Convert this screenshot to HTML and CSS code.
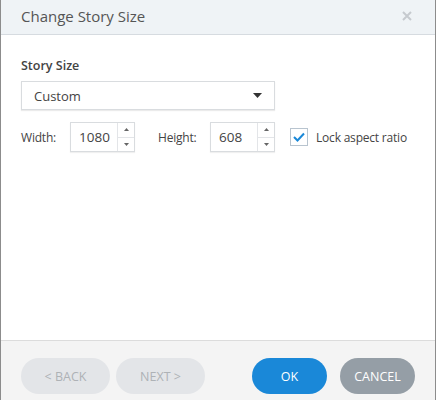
FILE: index.html
```html
<!DOCTYPE html>
<html>
<head>
<meta charset="utf-8">
<link rel="stylesheet" href="styles.css">
</head>
<body>
<div class="dialog">
  <div class="header">
    <div class="title">Change Story Size</div>
    <svg class="close" width="10" height="10" viewBox="0 0 10 10"><path d="M1 1L9 9M9 1L1 9" stroke="#c6cacf" stroke-width="2"/></svg>
  </div>
  <div class="body">
    <div class="label">Story Size</div>
    <div class="select">
      <span>Custom</span>
      <svg width="9" height="5" viewBox="0 0 9 5"><path d="M0 0H9L4.5 5Z" fill="#333"/></svg>
    </div>
    <div class="row">
      <span class="fl">Width:</span>
      <div class="spin">
        <span class="val">1080</span>
        <div class="arrows">
          <div class="arr"><svg width="5" height="3" viewBox="0 0 5 3"><path d="M0 3H5L2.5 0Z" fill="#666"/></svg></div>
          <div class="arr"><svg width="5" height="3" viewBox="0 0 5 3"><path d="M0 0H5L2.5 3Z" fill="#666"/></svg></div>
        </div>
      </div>
      <span class="fl hl">Height:</span>
      <div class="spin">
        <span class="val">608</span>
        <div class="arrows">
          <div class="arr"><svg width="5" height="3" viewBox="0 0 5 3"><path d="M0 3H5L2.5 0Z" fill="#666"/></svg></div>
          <div class="arr"><svg width="5" height="3" viewBox="0 0 5 3"><path d="M0 0H5L2.5 3Z" fill="#666"/></svg></div>
        </div>
      </div>
      <div class="check">
        <svg width="12" height="10" viewBox="0 0 12 10"><path d="M1 5L4.5 8.5L11 1.5" stroke="#1a88d8" stroke-width="2" fill="none"/></svg>
      </div>
      <span class="cl">Lock aspect ratio</span>
    </div>
  </div>
  <div class="footer">
    <div class="btn dis">&lt; BACK</div>
    <div class="btn dis">NEXT &gt;</div>
    <div class="spacer"></div>
    <div class="btn ok">OK</div>
    <div class="btn cancel">CANCEL</div>
  </div>
</div>
</body>
</html>
```
FILE: styles.css
```css
html, body { margin: 0; padding: 0; }
body { width: 436px; height: 400px; overflow: hidden; background: #fff; font-family: "Open Sans", "Noto Sans", sans-serif; color: #444; }
.dialog { width: 436px; height: 420px; box-sizing: border-box; border-left: 1px solid #8c8c8c; border-right: 1px solid #8c8c8c; display: flex; flex-direction: column; }
.header { height: 34px; background: #eff3f6; border-bottom: 1px solid #d6dbe0; display: flex; align-items: center; padding: 0 23px 0 20px; justify-content: space-between; }
.title { font-size: 15px; color: #555; margin-top: -3px; }
.close { margin-top: -3px; }
.body { flex: 1; padding: 22px 20px 0 20px; }
.label { font-size: 12.5px; font-weight: 600; color: #444; height: 18px; }
.select { margin-top: 6px; width: 254px; height: 29px; box-sizing: border-box; border: 1px solid #d9dcdf; box-shadow: 0 1px 1px rgba(0,0,0,0.08); display: flex; align-items: center; justify-content: space-between; padding: 0 12px 0 12px; font-size: 13px; color: #444; }
.row { display: flex; align-items: center; margin-top: 12px; height: 30px; }
.fl { font-size: 12px; letter-spacing: -0.2px; color: #444; width: 49px; }
.hl { margin-left: 23px; width: 52px; }
.spin { width: 65px; height: 30px; box-sizing: border-box; border: 1px solid #d9dcdf; display: flex; box-shadow: 0 1px 1px rgba(0,0,0,0.06); }
.val { flex: 1; font-size: 13.5px; padding-left: 8px; line-height: 28px; color: #444; }
.arrows { width: 16px; border-left: 1px solid #e3e5e8; display: flex; flex-direction: column; }
.arr { flex: 1; display: flex; align-items: center; justify-content: center; }
.arr + .arr { border-top: 1px solid #e3e5e8; }
.check { margin-left: 15px; width: 18px; height: 18px; box-sizing: border-box; border: 1px solid #b8c4cf; display: flex; align-items: center; justify-content: center; }
.cl { margin-left: 8px; font-size: 12px; letter-spacing: -0.2px; color: #444; }
.footer { height: 80px; background: #f4f4f4; border-top: 1px solid #dcdcdc; display: flex; padding: 17px 20px 0 20px; box-sizing: border-box; gap: 6px; }
.spacer { flex: 1; }
.btn { height: 36px; border-radius: 18px; display: flex; align-items: center; justify-content: center; font-size: 12.5px; }
.dis { width: 89px; background: #e3e5e8; color: #aeb2b6; }
.ok { width: 75px; background: #1a88d8; color: #fff; margin-right: 7px; }
.cancel { width: 75px; background: #959ea6; color: #fff; }
```
